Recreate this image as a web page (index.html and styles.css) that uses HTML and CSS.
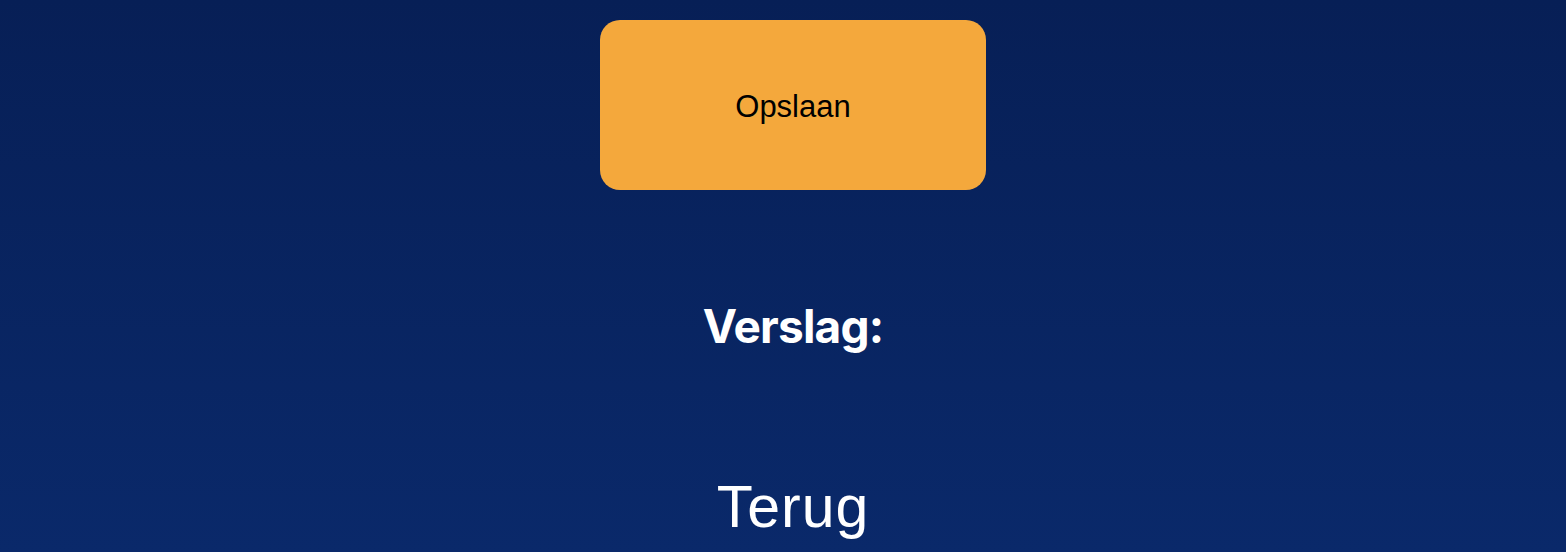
FILE: index.html
```html
<!DOCTYPE html>
<html lang="nl">
<head>
<meta charset="utf-8">
<title>Verslag</title>
<link rel="stylesheet" href="styles.css">
</head>
<body>
<main class="page">
  <button class="save-btn" type="button">Opslaan</button>
  <h2 class="report-title">Verslag:</h2>
  <a class="back-link" href="#">Terug</a>
</main>
</body>
</html>
```

FILE: styles.css
```css
html, body {
  margin: 0;
  padding: 0;
  height: 100%;
}

body {
  background: linear-gradient(180deg, #071f56 0%, #0a296a 100%);
  overflow: hidden;
}

.page {
  display: flex;
  flex-direction: column;
  align-items: center;
  padding-top: 20px;
  padding-left: 20px;
}

.save-btn {
  width: 386px;
  height: 170px;
  padding: 3px 0 0;
  border: none;
  border-radius: 20px;
  background: #f4a83c;
  color: #000;
  font-family: "Liberation Sans", Arial, sans-serif;
  font-size: 31px;
  cursor: pointer;
}

.report-title {
  margin: 112px 0 0;
  font-family: Inter, "Liberation Sans", sans-serif;
  font-weight: 700;
  font-size: 46px;
  line-height: 48px;
  letter-spacing: -0.8px;
  color: #fff;
}

.back-link {
  margin-top: 125px;
  font-family: "Liberation Sans", Arial, sans-serif;
  font-size: 59px;
  line-height: 64px;
  letter-spacing: 1px;
  color: #fff;
  text-decoration: none;
}
```
